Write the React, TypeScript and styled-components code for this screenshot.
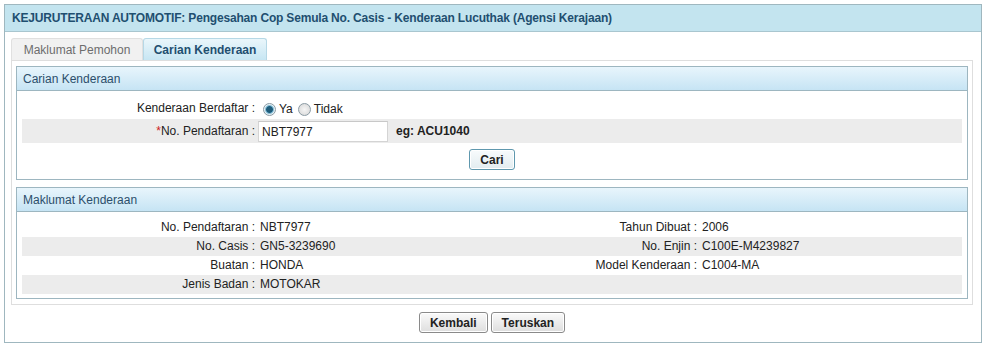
import React, {useState} from "react";
import styled, {createGlobalStyle} from "styled-components";

const GlobalStyle = createGlobalStyle`
	html, body {
		margin: 0;
		padding: 0;
		background: #ffffff;
		font-family: "Liberation Sans", Arial, sans-serif;
		font-size: 12px;
		color: #222;
	}
`;

const Page = styled.div`
	padding: 4px;
`;

const Panel = styled.div`
	width: 976px;
	height: 337px;
	border: 1px solid #9fb7bf;
	display: flex;
	flex-direction: column;
`;

const PanelTitle = styled.div`
	height: 26px;
	line-height: 27px;
	padding-left: 7px;
	background: #c3e4ef;
	border-bottom: 1px solid #a9c6cf;
	font-weight: bold;
	color: #1f4f70;
	letter-spacing: -0.18px;
`;

const PanelBody = styled.div`
	padding: 5px 6px 0 6px;
`;

const TabRow = styled.div`
	display: flex;
	height: 23px;
	align-items: flex-end;
`;

const Tab = styled.div<{ $active?: boolean; $w: number }>`
	box-sizing: border-box;
	width: ${p => p.$w}px;
	height: 22px;
	line-height: 23px;
	border: 1px solid ${p => p.$active ? "#b6d8e6" : "#e0e0e0"};
	border-bottom: none;
	border-radius: 3px 3px 0 0;
	color: ${p => p.$active ? "#1f4f70" : "#6d6d6d"};
	font-weight: ${p => p.$active ? "bold" : "normal"};
	background: ${p => p.$active ? "linear-gradient(#eaf6fb, #c7e6f3)" : "#f1f1f1"};
	text-align: center;
	white-space: nowrap;
`;

const TabPanel = styled.div`
	width: 952px;
	height: 238px;
	border: 1px solid #dedede;
	padding: 5px 4px 0 4px;
	display: flex;
	flex-direction: column;
	gap: 7px;
`;

const Section = styled.div<{ $height: number }>`
	height: ${p => p.$height}px;
	border: 1px solid #9db6c0;
`;

const SectionTitle = styled.div`
	height: 23px;
	line-height: 24px;
	padding-left: 6px;
	background: linear-gradient(#e8f5fc, #c6e4f4);
	border-bottom: 1px solid #9db6c0;
	color: #2c4e6b;
`;

const SectionBody = styled.div<{ $top: number }>`
	padding: ${p => p.$top}px 5px 0 5px;
`;

const FormRow = styled.div<{ $shade?: boolean; $h: number }>`
	display: flex;
	align-items: center;
	height: ${p => p.$h}px;
	background: ${p => p.$shade ? "#ececec" : "transparent"};
`;

const FormLabel = styled.div`
	flex: 0 0 auto;
	box-sizing: border-box;
	width: 236px;
	text-align: right;
	padding-right: 3px;
	color: #222;
`;

const Required = styled.span`
	color: #cc2222;
`;

const RadioGroup = styled.label`
	display: flex;
	align-items: center;
	cursor: pointer;
	padding-top: 2px;
`;

const RadioDot = styled.span<{ $on?: boolean }>`
	width: 13px;
	height: 13px;
	border-radius: 50%;
	border: 1px solid #8a9aa3;
	background: ${p => p.$on ? "radial-gradient(circle, #1f5c7a 0 3px, #5aa0c0 3.5px, #e6f2f7 5px)" : "radial-gradient(circle, #f6f6f6, #d4d4d4)"};
	margin: 0 3px 0 5px;
	box-sizing: border-box;
`;

const TextBox = styled.input`
	flex: 0 0 130px;
	width: 130px;
	height: 21px;
	box-sizing: border-box;
	border: 1px solid #d4d4d4;
	border-top-color: #c8c8c8;
	padding: 2px 3px 0;
	margin: 0;
	font-family: "Liberation Sans", Arial, sans-serif;
	font-size: 12px;
	color: #222;
	outline: none;
`;

const Hint = styled.span`
	font-weight: bold;
	margin-left: 8px;
`;

const ButtonRow = styled.div<{ $top: number }>`
	display: flex;
	justify-content: center;
	gap: 3px;
	padding-top: ${p => p.$top}px;
`;

const Button = styled.button<{ $blue?: boolean }>`
	height: 21px;
	padding: 0 10px;
	font-family: "Liberation Sans", Arial, sans-serif;
	font-size: 12px;
	font-weight: bold;
	color: #222;
	border: 1px solid ${p => p.$blue ? "#5f98ae" : "#8a8a8a"};
	border-radius: 3px;
	background: ${p => p.$blue ? "linear-gradient(#f8fbfc, #e2ecf0)" : "linear-gradient(#fafafa, #dedede)"};
	box-shadow: inset 0 0 0 1px #ffffff;
	cursor: pointer;
`;

const InfoGrid = styled.div`
	display: grid;
	grid-template-columns: 236px 210px 232px 1fr;
`;

const InfoCell = styled.div<{ $shade?: boolean; $label?: boolean }>`
	height: 19px;
	line-height: 19px;
	background: ${p => p.$shade ? "#ececec" : "transparent"};
	text-align: ${p => p.$label ? "right" : "left"};
	padding: ${p => p.$label ? "0 3px 0 0" : "0 0 0 2px"};
	white-space: nowrap;
`;

const Footer = styled.div`
	padding-top: 7px;
	display: flex;
	justify-content: center;
	gap: 3px;
	padding-right: 2px;
`;

const vehicle = [
	["No. Pendaftaran :", "NBT7977", "Tahun Dibuat :", "2006"],
	["No. Casis :", "GN5-3239690", "No. Enjin :", "C100E-M4239827"],
	["Buatan :", "HONDA", "Model Kenderaan :", "C1004-MA"],
	["Jenis Badan :", "MOTOKAR", "", ""],
];

export default function App() {
	const [registered, setRegistered] = useState(true);
	const [plate, setPlate] = useState("NBT7977");

	return (
		<Page>
			<GlobalStyle/>
			<Panel>
				<PanelTitle>KEJURUTERAAN AUTOMOTIF: Pengesahan Cop Semula No. Casis - Kenderaan Lucuthak (Agensi Kerajaan)</PanelTitle>
				<PanelBody>
					<TabRow>
						<Tab $w={132}>Maklumat Pemohon</Tab>
						<Tab $w={124} $active>Carian Kenderaan</Tab>
					</TabRow>
					<TabPanel>
						<Section $height={112}>
							<SectionTitle>Carian Kenderaan</SectionTitle>
							<SectionBody $top={6}>
								<FormRow $h={22}>
									<FormLabel>Kenderaan Berdaftar :</FormLabel>
									<RadioGroup onClick={() => setRegistered(true)}>
										<RadioDot $on={registered}/>Ya
									</RadioGroup>
									<RadioGroup onClick={() => setRegistered(false)}>
										<RadioDot $on={!registered}/>Tidak
									</RadioGroup>
								</FormRow>
								<FormRow $shade $h={24}>
									<FormLabel><Required>*</Required>No. Pendaftaran :</FormLabel>
									<TextBox value={plate} onChange={e => setPlate(e.target.value)}/>
									<Hint>eg: ACU1040</Hint>
								</FormRow>
								<ButtonRow $top={6}>
									<Button $blue>Cari</Button>
								</ButtonRow>
							</SectionBody>
						</Section>
						<Section $height={110}>
							<SectionTitle>Maklumat Kenderaan</SectionTitle>
							<SectionBody $top={6}>
								<InfoGrid>
									{vehicle.map((row, i) => row.map((cell, j) => (
										<InfoCell key={i + "-" + j} $shade={i % 2 === 1} $label={j % 2 === 0}>{cell}</InfoCell>
									)))}
								</InfoGrid>
							</SectionBody>
						</Section>
					</TabPanel>
					<Footer>
						<Button>Kembali</Button>
						<Button>Teruskan</Button>
					</Footer>
				</PanelBody>
			</Panel>
		</Page>
	);
}
